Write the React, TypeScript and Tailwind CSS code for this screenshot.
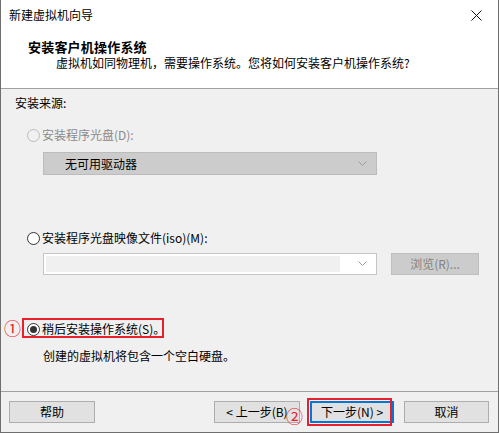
import React from "react";

function Radio({ checked, disabled }: { checked?: boolean; disabled?: boolean }) {
  return (
    <span
      className={
        "relative inline-flex w-[13px] h-[13px] rounded-full border items-center justify-center shrink-0 " +
        (disabled ? "border-[#bcbcbc] bg-[#f0f0f0]" : "border-[#333333] bg-white")
      }
    >
      {checked && <span className="w-[7px] h-[7px] rounded-full bg-[#333333]" />}
    </span>
  );
}

function Chevron({ color }: { color: string }) {
  return (
    <svg width="9" height="6" viewBox="0 0 9 6" className="shrink-0">
      <path d="M0.5 0.5 L4.5 4.5 L8.5 0.5" fill="none" stroke={color} strokeWidth="1" />
    </svg>
  );
}

function Btn({ children, className }: { children: React.ReactNode; className?: string }) {
  return (
    <div
      className={
        "h-[22px] flex items-center justify-center bg-[#e1e1e1] text-black text-[12px] " +
        (className ?? "")
      }
    >
      {children}
    </div>
  );
}

export default function App() {
  return (
    <div className="w-[499px] h-[433px] relative flex flex-col border-l border-r border-b border-[#6e6e6e] bg-[#f0f0f0] font-['Microsoft_YaHei','Noto_Sans_CJK_SC',sans-serif] text-[12px] leading-[16px] text-black overflow-hidden">
      {/* Header */}
      <div className="bg-white h-[89px] border-b border-[#a0a0a0] flex flex-col">
        <div className="h-[30px] flex items-center justify-between pl-[8px] pr-[16px]">
          <span>新建虚拟机向导</span>
          <svg width="11" height="11" viewBox="0 0 11 11">
            <path d="M0.5 0.5 L10.5 10.5 M10.5 0.5 L0.5 10.5" stroke="#111" strokeWidth="1" />
          </svg>
        </div>
        <div className="pl-[27px] mt-[9px] font-bold text-[13px] tracking-[0.2px]">安装客户机操作系统</div>
        <div className="pl-[55px]">虚拟机如同物理机，需要操作系统。您将如何安装客户机操作系统?</div>
      </div>

      {/* Body */}
      <div className="flex-1 flex flex-col pt-[6px]">
        <div className="pl-[14px]">安装来源:</div>

        <div className="mt-[16px] pl-[26px] flex items-center gap-[2px] text-[#8a8a8a]">
          <Radio disabled />
          <span>安装程序光盘(D):</span>
        </div>
        <div className="mt-[9px] ml-[42px] w-[334px] h-[23px] bg-[#cccccc] border border-[#bcbcbc] flex items-center justify-between pl-[21px] pr-[9px]">
          <span>无可用驱动器</span>
          <Chevron color="#9a9a9a" />
        </div>

        <div className="mt-[55px] pl-[26px] flex items-center gap-[2px]">
          <Radio />
          <span>安装程序光盘映像文件(iso)(M):</span>
        </div>
        <div className="mt-[7px] ml-[42px] flex items-center gap-[14px]">
          <div className="w-[334px] h-[22px] bg-white border border-[#c6c6c6] flex items-center pr-[9px]">
            <div className="flex-1 h-[16px] ml-[2px] mr-[18px] bg-[#f0f0f0]" />
            <Chevron color="#9a9a9a" />
          </div>
          <div className="w-[88px] h-[22px] bg-[#cccccc] border border-[#bfbfbf] flex items-center justify-center text-[#838383]">
            浏览(R)...
          </div>
        </div>

        <div className="mt-[46px] pl-[26px] flex items-center gap-[2px]">
          <Radio checked />
          <span>稍后安装操作系统(S)。</span>
        </div>
        <div className="mt-[11px] pl-[42px]">创建的虚拟机将包含一个空白硬盘。</div>
      </div>

      {/* Footer */}
      <div className="h-[41px] border-t border-[#a0a0a0] flex items-start pt-[9px] pl-[8px] pr-[9px]">
        <Btn className="w-[86px] border border-[#adadad]">帮助</Btn>
        <div className="flex-1" />
        <Btn className="w-[86px] border border-[#adadad]">&lt; 上一步(B)</Btn>
        <Btn className="w-[84px] ml-[10px] border-2 border-[#0078d7]">下一步(N) &gt;</Btn>
        <Btn className="w-[85px] ml-[10px] border border-[#adadad]">取消</Btn>
      </div>

      {/* Annotations */}
      <div className="absolute left-[21px] top-[318px] w-[142px] h-[20px] border-2 border-[#e8202a]" />
      <div className="absolute left-[3px] top-[318px] text-[#e8202a] text-[17px] leading-[20px]">①</div>
      <div className="absolute left-[306px] top-[398px] w-[85px] h-[28px] border-2 border-[#e8202a]" />
      <div className="absolute left-[285px] top-[406px] text-[#e8202a] text-[17px] leading-[20px]">②</div>
    </div>
  );
}
